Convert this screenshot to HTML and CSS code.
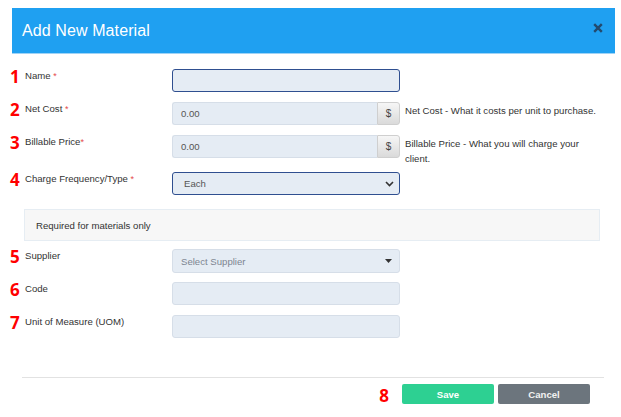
FILE: index.html
```html
<!DOCTYPE html>
<html>
<head>
<meta charset="utf-8">
<link rel="stylesheet" href="styles.css">
</head>
<body>
<div class="page">
  <header class="modal-head">
    <h1 class="title">Add New Material</h1>
    <button class="close" aria-label="Close">
      <svg width="10" height="10" viewBox="0 0 10 10"><path d="M1.2 1.2 L8.8 8.8 M8.8 1.2 L1.2 8.8" stroke="#234a6e" stroke-width="2.4" stroke-linecap="butt"/></svg>
    </button>
  </header>

  <main class="form">
    <div class="row">
      <span class="num">1</span>
      <label class="lbl">Name <span class="req">*</span></label>
      <div class="field"><div class="ctl focus"></div></div>
    </div>

    <div class="row">
      <span class="num">2</span>
      <label class="lbl">Net Cost <span class="req">*</span></label>
      <div class="field group">
        <div class="ctl grow"><span class="val">0.00</span></div>
        <span class="addon">$</span>
      </div>
      <p class="help">Net Cost - What it costs per unit to purchase.</p>
    </div>

    <div class="row">
      <span class="num">3</span>
      <label class="lbl">Billable Price<span class="req">*</span></label>
      <div class="field group">
        <div class="ctl grow"><span class="val">0.00</span></div>
        <span class="addon">$</span>
      </div>
      <p class="help narrow">Billable Price - What you will charge your client.</p>
    </div>

    <div class="row">
      <span class="num">4</span>
      <label class="lbl">Charge Frequency/Type <span class="req">*</span></label>
      <div class="field"><div class="ctl focus select"><span class="val each">Each</span>
        <svg class="chev" width="9" height="6" viewBox="0 0 9 6"><path d="M1 1 L4.5 4.5 L8 1" fill="none" stroke="#333" stroke-width="1.6"/></svg>
      </div></div>
    </div>

    <div class="panel">Required for materials only</div>

    <div class="row">
      <span class="num">5</span>
      <label class="lbl">Supplier</label>
      <div class="field"><div class="ctl select tall"><span class="val ph">Select Supplier</span>
        <svg class="caret" width="7" height="4" viewBox="0 0 7 4"><path d="M0 0 L7 0 L3.5 4 Z" fill="#333"/></svg>
      </div></div>
    </div>

    <div class="row">
      <span class="num">6</span>
      <label class="lbl">Code</label>
      <div class="field"><div class="ctl"></div></div>
    </div>

    <div class="row">
      <span class="num">7</span>
      <label class="lbl">Unit of Measure (UOM)</label>
      <div class="field"><div class="ctl"></div></div>
    </div>
  </main>

  <footer class="foot">
    <span class="num num8">8</span>
    <button class="btn save">Save</button>
    <button class="btn cancel">Cancel</button>
  </footer>
</div>
</body>
</html>
```

FILE: styles.css
```css
html, body {
  margin: 0;
  padding: 0;
  background: #ffffff;
}
body {
  font-family: "Liberation Sans", Arial, sans-serif;
  font-size: 9.6px;
  color: #333333;
}
.page {
  width: 621px;
  height: 417px;
  padding-top: 8px;
  box-sizing: border-box;
}
.modal-head {
  margin: 0 6px 0 12px;
  height: 45px;
  background: #1fa0f1;
  border-bottom: 1px solid #9fd3f6;
  display: flex;
  align-items: center;
  justify-content: space-between;
  padding: 0 12px 0 10px;
}
.title {
  margin: 0;
  font-size: 16px;
  font-weight: normal;
  color: #ffffff;
  letter-spacing: 0.1px;
}
.close {
  border: 0;
  background: none;
  padding: 0;
  width: 10px;
  height: 10px;
  display: flex;
  margin-top: -6px;
}
.form {
  padding: 15px 0 0 10px;
  display: flex;
  flex-direction: column;
  gap: 6px;
}
.row {
  display: grid;
  grid-template-columns: 15px 147px 228px 1fr;
  min-height: 27px;
  align-items: start;
}
.num {
  font-family: "Open Sans", "Liberation Sans", sans-serif;
  font-weight: 700;
  font-size: 17px;
  line-height: 16px;
  color: #ff0000;
}
.lbl {
  line-height: 13px;
  color: #333;
}
.req {
  color: #e4484b;
  font-size: 9px;
}
.field {
  display: flex;
}
.ctl {
  box-sizing: border-box;
  width: 228px;
  height: 23px;
  background: #e5ecf4;
  border: 1px solid #d6dee8;
  border-radius: 3px;
  display: flex;
  align-items: center;
}
.ctl.tall {
  height: 24px;
}
.ctl.focus {
  border-color: #2f4f90;
}
.ctl.grow {
  width: 205px;
  border-radius: 3px 0 0 3px;
  border-right: 0;
}
.addon {
  box-sizing: border-box;
  width: 23px;
  height: 23px;
  border: 1px solid #cfcfcf;
  border-radius: 0 3px 3px 0;
  background: linear-gradient(#f6f6f6, #dadada);
  display: flex;
  align-items: center;
  justify-content: center;
  color: #444;
  font-size: 10px;
}
.val {
  padding-left: 8px;
  color: #555;
}
.val.each {
  padding-left: 11px;
}
.val.ph {
  color: #7d8590;
}
.select {
  justify-content: space-between;
}
.chev {
  margin-right: 5px;
}
.caret {
  margin-right: 7px;
}
.help {
  margin: 0 0 0 5px;
  padding-top: 1px;
  line-height: 15px;
  color: #333;
  white-space: nowrap;
}
.help.narrow {
  white-space: normal;
  max-width: 185px;
}
.panel {
  margin: 4px 21px 2px 14px;
  height: 32px;
  box-sizing: border-box;
  background: #f7f7f7;
  border: 1px solid #e6edf3;
  display: flex;
  align-items: center;
  padding-left: 11px;
  color: #333;
}
.foot {
  margin: 35px 17px 0 22px;
  border-top: 1px solid #e2e2e2;
  padding-top: 6px;
  display: flex;
  justify-content: flex-end;
  align-items: center;
  gap: 4px;
  padding-right: 14px;
}
.num8 {
  margin-right: 9px;
  margin-top: 4px;
}
.btn {
  width: 92px;
  height: 20px;
  border: 0;
  border-radius: 2px;
  font-family: "Liberation Sans", Arial, sans-serif;
  font-weight: bold;
  font-size: 9.6px;
  color: #ffffff;
  padding: 0;
}
.save {
  background: #2dd092;
}
.cancel {
  background: #6c757d;
  color: #f2f2f2;
}
```
